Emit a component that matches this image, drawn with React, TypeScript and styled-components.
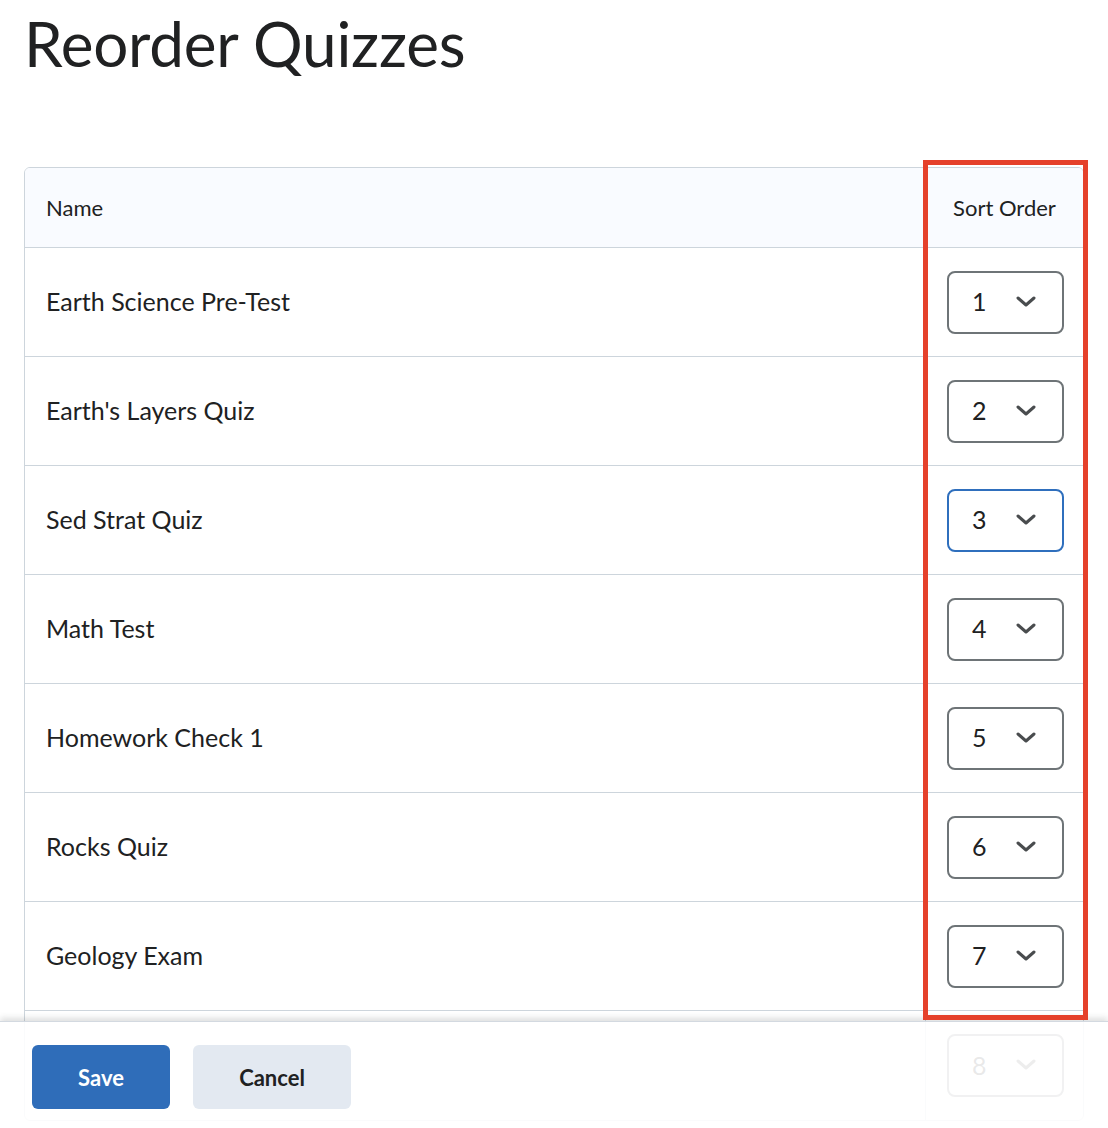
import React from "react";
import styled, { createGlobalStyle } from "styled-components";

const GlobalStyle = createGlobalStyle`
  html, body { margin: 0; padding: 0; background: #ffffff; }
  body { font-family: Lato, "Noto Sans", sans-serif; color: #202122; }
  * { box-sizing: border-box; }
`;

const Page = styled.div`
  padding: 0 24px 140px;
`;

const Title = styled.h1`
  margin: 12px 0 0;
  font-size: 62px;
  line-height: 62px;
  font-weight: 400;
  letter-spacing: -0.2px;
  color: #202122;
`;

const TableWrap = styled.div`
  position: relative;
  margin-top: 93px;
`;

const Table = styled.table`
  width: 100%;
  border-collapse: separate;
  border-spacing: 0;
  border: 1px solid #cdd5dc;
  border-radius: 6px;
  overflow: hidden;
`;

const HeadCell = styled.th<{ $align?: "left" | "center" }>`
  height: 80px;
  padding: 0 0 0 21px;
  background: #f9fbff;
  border-bottom: 1px solid #cdd5dc;
  font-size: 22px;
  font-weight: 400;
  text-align: ${(p) => p.$align ?? "left"};
  color: #202122;
  &:last-child {
    width: 158px;
    padding: 0;
    border-left: 1px solid #cdd5dc;
  }
`;

const Row = styled.tr`
  &:not(:last-child) td {
    border-bottom: 1px solid #cdd5dc;
  }
`;

const NameCell = styled.td`
  height: 109px;
  padding: 0 0 3px 21px;
  font-size: 25px;
  color: #202122;
`;

const OrderCell = styled.td`
  height: 109px;
  border-left: 1px solid #cdd5dc;
  padding: 0;
`;

const Select = styled.div<{ $focused?: boolean }>`
  width: 117px;
  height: 63px;
  margin: 0 auto 0 21px;
  display: flex;
  align-items: center;
  padding: 0 26px 2px 23px;
  border: 2px solid ${(p) => (p.$focused ? "#2f6fbd" : "#6e7477")};
  border-radius: 8px;
  background: #ffffff;
  font-size: 25px;
  color: #202122;
`;

const Chevron = styled.svg`
  margin-left: auto;
  display: block;
`;

const Annotation = styled.div`
  position: absolute;
  top: -7px;
  right: -4px;
  width: 165px;
  height: 860px;
  border: 5px solid #e5412b;
  pointer-events: none;
  z-index: 20;
`;

const Footer = styled.div`
  position: fixed;
  left: 0;
  right: 0;
  bottom: 0;
  height: 107px;
  display: flex;
  align-items: flex-start;
  gap: 23px;
  padding: 23px 32px 0;
  background: rgba(255, 255, 255, 0.9);
  border-top: 1px solid #d3d9e0;
  box-shadow: 0 -3px 6px rgba(73, 76, 78, 0.18);
  z-index: 10;
`;

const Button = styled.button<{ $primary?: boolean }>`
  height: 64px;
  width: ${(p) => (p.$primary ? "138px" : "158px")};
  border: none;
  border-radius: 6px;
  font-family: Lato, "Noto Sans", sans-serif;
  font-size: 22px;
  font-weight: 700;
  background: ${(p) => (p.$primary ? "#2f6db9" : "#e3e9f1")};
  color: ${(p) => (p.$primary ? "#ffffff" : "#202122")};
  cursor: pointer;
`;

const quizzes = [
  "Earth Science Pre-Test",
  "Earth's Layers Quiz",
  "Sed Strat Quiz",
  "Math Test",
  "Homework Check 1",
  "Rocks Quiz",
  "Geology Exam",
  "",
];

function ChevronDown() {
  return (
    <Chevron width="20" height="11" viewBox="0 0 20 11" fill="none">
      <path
        d="M2 2 L10 9 L18 2"
        stroke="#494c4e"
        strokeWidth="3"
        strokeLinecap="round"
        strokeLinejoin="round"
      />
    </Chevron>
  );
}

export default function App() {
  return (
    <>
      <GlobalStyle />
      <Page>
        <Title>Reorder Quizzes</Title>
        <TableWrap>
          <Table>
            <thead>
              <tr>
                <HeadCell>Name</HeadCell>
                <HeadCell $align="center">Sort Order</HeadCell>
              </tr>
            </thead>
            <tbody>
              {quizzes.map((q, i) => (
                <Row key={i}>
                  <NameCell>{q}</NameCell>
                  <OrderCell>
                    <Select $focused={i === 2}>
                      <span>{i + 1}</span>
                      <ChevronDown />
                    </Select>
                  </OrderCell>
                </Row>
              ))}
            </tbody>
          </Table>
          <Annotation />
        </TableWrap>
      </Page>
      <Footer>
        <Button $primary>Save</Button>
        <Button>Cancel</Button>
      </Footer>
    </>
  );
}
